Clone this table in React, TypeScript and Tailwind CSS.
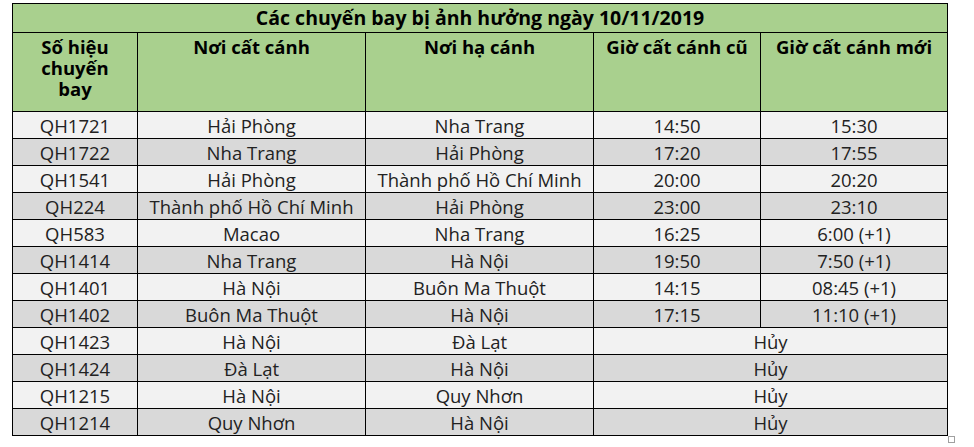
import React from "react";

interface Flight {
  code: string;
  from: string;
  to: string;
  oldTime?: string;
  newTime?: string;
}

const flights: Flight[] = [
  { code: "QH1721", from: "Hải Phòng", to: "Nha Trang", oldTime: "14:50", newTime: "15:30" },
  { code: "QH1722", from: "Nha Trang", to: "Hải Phòng", oldTime: "17:20", newTime: "17:55" },
  { code: "QH1541", from: "Hải Phòng", to: "Thành phố Hồ Chí Minh", oldTime: "20:00", newTime: "20:20" },
  { code: "QH224", from: "Thành phố Hồ Chí Minh", to: "Hải Phòng", oldTime: "23:00", newTime: "23:10" },
  { code: "QH583", from: "Macao", to: "Nha Trang", oldTime: "16:25", newTime: "6:00 (+1)" },
  { code: "QH1414", from: "Nha Trang", to: "Hà Nội", oldTime: "19:50", newTime: "7:50 (+1)" },
  { code: "QH1401", from: "Hà Nội", to: "Buôn Ma Thuột", oldTime: "14:15", newTime: "08:45 (+1)" },
  { code: "QH1402", from: "Buôn Ma Thuột", to: "Hà Nội", oldTime: "17:15", newTime: "11:10 (+1)" },
  { code: "QH1423", from: "Hà Nội", to: "Đà Lạt" },
  { code: "QH1424", from: "Đà Lạt", to: "Hà Nội" },
  { code: "QH1215", from: "Hà Nội", to: "Quy Nhơn" },
  { code: "QH1214", from: "Quy Nhơn", to: "Hà Nội" },
];

const base = "border border-black text-center p-0";
const td = `${base} align-middle leading-none pt-[2px]`;
const th = `${base} align-top font-bold text-[18.5px] leading-[21px] pt-[3px] text-black`;

export default function App() {
  return (
    <div
      className="relative w-[974px] h-[447px] bg-white text-[#222]"
      style={{ fontFamily: '"Open Sans", "Noto Sans", sans-serif' }}
    >
      <div className="pt-[3px] pl-[12px]">
        <table className="table-fixed border-collapse w-[935px] text-[18.5px]">
          <colgroup>
            <col className="w-[125px]" />
            <col className="w-[228px]" />
            <col className="w-[228px]" />
            <col className="w-[167px]" />
            <col className="w-[187px]" />
          </colgroup>
          <thead>
            <tr className="h-[29px] bg-[#a9d08e]">
              <th colSpan={5} className={`${base} align-middle font-bold text-[19.5px] leading-none text-black`}>
                Các chuyến bay bị ảnh hưởng ngày 10/11/2019
              </th>
            </tr>
            <tr className="h-[79px] bg-[#a9d08e]">
              <th className={th}>
                Số hiệu
                <br />
                chuyến
                <br />
                bay
              </th>
              <th className={th}>Nơi cất cánh</th>
              <th className={th}>Nơi hạ cánh</th>
              <th className={th}>Giờ cất cánh cũ</th>
              <th className={th}>Giờ cất cánh mới</th>
            </tr>
          </thead>
          <tbody>
            {flights.map((f, i) => (
              <tr key={f.code} className={`h-[27px] ${i % 2 === 0 ? "bg-[#f2f2f2]" : "bg-[#d9d9d9]"}`}>
                <td className={td}>{f.code}</td>
                <td className={td}>{f.from}</td>
                <td className={td}>{f.to}</td>
                {f.oldTime ? (
                  <>
                    <td className={td}>{f.oldTime}</td>
                    <td className={td}>{f.newTime}</td>
                  </>
                ) : (
                  <td colSpan={2} className={td}>
                    Hủy
                  </td>
                )}
              </tr>
            ))}
          </tbody>
        </table>
      </div>
      {/* table resize handle */}
      <div className="absolute left-[948px] top-[436px] w-[7px] h-[7px] border border-[#a0a0a0] bg-white" />
    </div>
  );
}
